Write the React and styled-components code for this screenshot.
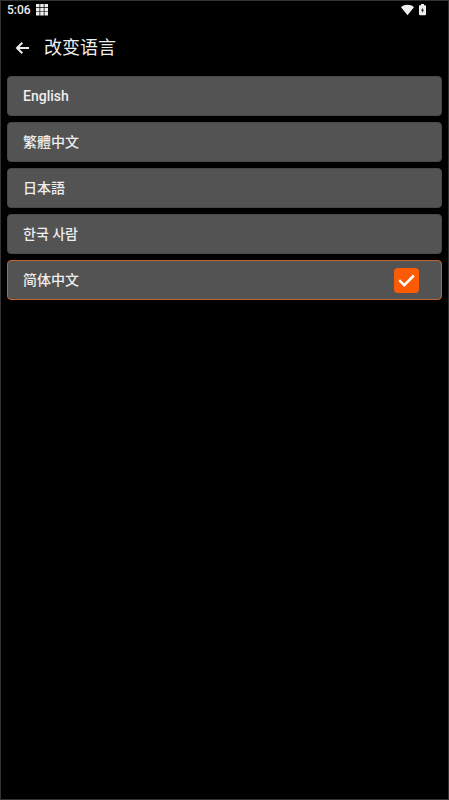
import React, { useState } from "react";
import styled, { createGlobalStyle } from "styled-components";

const GlobalStyle = createGlobalStyle`
    * {
        box-sizing: border-box;
    }
    body {
        margin: 0;
        background-color: #000000;
        font-family: Roboto, "Noto Sans CJK SC", sans-serif;
    }
    `

const Screen = styled.div`
    min-height: 100vh;
    border: 1px solid #333333;
    background-color: #000000;
    color: #eeeeee;
    `

const StatusBar = styled.div`
    display: flex;
    align-items: center;
    justify-content: space-between;
    height: 18px;
    padding: 0 22px 0 6px;
    `

const StatusGroup = styled.div`
    display: flex;
    align-items: center;
    gap: 5px;
    `

const Clock = styled.span`
    font-size: 12px;
    font-weight: 500;
    line-height: 18px;
    `

const TopBar = styled.header`
    display: flex;
    align-items: center;
    gap: 14px;
    height: 57px;
    padding: 0 14px;
    `

const BackButton = styled.button`
    display: flex;
    padding: 0;
    border: none;
    background: none;
    color: inherit;
    cursor: pointer;
    `

const Title = styled.h1`
    margin: 0;
    font-size: 18px;
    font-weight: 400;
    line-height: 26px;
    `

const LanguageList = styled.div`
    display: flex;
    flex-direction: column;
    gap: 6px;
    padding: 0 6px;
    `

const LanguageRow = styled.label`
    display: flex;
    align-items: center;
    justify-content: space-between;
    height: 40px;
    padding: 0 22px 0 15px;
    border: 1px solid ${(props) => (props.$selected ? "#c4622f" : "#484848")};
    border-radius: 4px;
    background-color: #535353;
    cursor: pointer;
    `

const LanguageName = styled.span`
    font-family: Roboto, ${(props) => props.$font}, sans-serif;
    font-size: 14px;
    font-weight: 500;
    line-height: 20px;
    `

const Mark = styled.span`
    display: grid;
    align-items: center;
    justify-items: center;
    width: 25px;
    height: 25px;

    > * {
        grid-area: 1 / 1;
    }
    `

const Radio = styled.input`
    appearance: none;
    width: 25px;
    height: 25px;
    margin: 0;
    border-radius: 4px;
    cursor: pointer;
    &:checked {
        background-color: #fb5b05;
    }
    `

const CheckIcon = styled.svg`
    pointer-events: none;
    `

const languages = [
    { code: "en", name: "English", font: "\"Noto Sans CJK SC\"" },
    { code: "zh-Hant", name: "繁體中文", font: "\"Noto Sans CJK TC\"" },
    { code: "ja", name: "日本語", font: "\"Noto Sans CJK JP\"" },
    { code: "ko", name: "한국 사람", font: "\"Noto Sans CJK KR\"" },
    { code: "zh-Hans", name: "简体中文", font: "\"Noto Sans CJK SC\"" },
]

const AppsIcon = () => (
    <svg width="12" height="12" viewBox="0 0 12 12" fill="currentColor" aria-hidden="true">
        <path d="M0 0h3.5v3.3H0zM4.25 0h3.5v3.3h-3.5zM8.5 0H12v3.3H8.5zM0 4h3.5v3.4H0zM4.25 4h3.5v3.4h-3.5zM8.5 4H12v3.4H8.5zM0 8.1h3.5v3.4H0zM4.25 8.1h3.5v3.4h-3.5zM8.5 8.1H12v3.4H8.5z" />
    </svg>
)

const WifiIcon = () => (
    <svg width="13" height="13" viewBox="0 0 13 13" fill="currentColor" aria-hidden="true">
        <path d="M0 3.2C3.7 0 9.3 0 13 3.2L6.5 11.2z" />
    </svg>
)

const BatteryIcon = () => (
    <svg width="7" height="13" viewBox="0 0 7 13" aria-hidden="true">
        <path fill="currentColor" d="M2 0h3v1.2h1.2q.8 0 .8.8v8.2q0 1-1 1H1q-1 0-1-1V2q0-.8.8-.8H2z" />
        <path fill="#222222" d="M3.8 3.5L2 6.8h1.2V9L5 5.8H3.8z" />
    </svg>
)

const BackIcon = () => (
    <svg width="15" height="14" viewBox="0 0 15 14" fill="none" stroke="currentColor" strokeWidth="2" aria-hidden="true">
        <path d="M14 7H2.5M7.3 1.7L2 7l5.3 5.3" />
    </svg>
)

const App = () => {
    const [selected, setSelected] = useState("zh-Hans");

    return (
        <>
            <GlobalStyle />
            <Screen>
                <StatusBar>
                    <StatusGroup>
                        <Clock>5:06</Clock>
                        <AppsIcon />
                    </StatusGroup>
                    <StatusGroup>
                        <WifiIcon />
                        <BatteryIcon />
                    </StatusGroup>
                </StatusBar>
                <TopBar>
                    <BackButton type="button" aria-label="返回">
                        <BackIcon />
                    </BackButton>
                    <Title>改变语言</Title>
                </TopBar>
                <LanguageList role="radiogroup" aria-label="改变语言">
                    {languages.map(({ code, name, font }) => (
                        <LanguageRow key={code} $selected={selected === code}>
                            <LanguageName lang={code} $font={font}>{name}</LanguageName>
                            <Mark>
                                <Radio
                                    type="radio"
                                    name="language"
                                    value={code}
                                    checked={selected === code}
                                    onChange={() => setSelected(code)}
                                />
                                {selected === code && (
                                    <CheckIcon width="17" height="13" viewBox="0 0 17 13" fill="none" aria-hidden="true">
                                        <path d="M1.2 6.2l5 5L15.8 1.5" stroke="#ffffff" strokeWidth="2.5" />
                                    </CheckIcon>
                                )}
                            </Mark>
                        </LanguageRow>
                    ))}
                </LanguageList>
            </Screen>
        </>
    )
}

export default App
